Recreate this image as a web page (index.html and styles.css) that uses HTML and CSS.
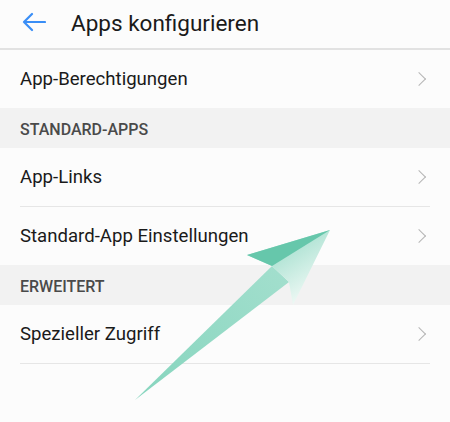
FILE: index.html
```html
<!DOCTYPE html>
<html lang="de">
<head>
    <meta charset="UTF-8">
    <title>Apps konfigurieren</title>
    <link rel="stylesheet" href="styles.css">
</head>
<body>
<div id="wrap">
    <div class="header">
        <svg class="back" width="24" height="20" viewBox="0 0 24 20">
            <path d="M23 10H2M10 2L2 10l8 8" fill="none" stroke="#3a8ef6" stroke-width="2.2" stroke-linecap="round" stroke-linejoin="round"/>
        </svg>
        <h1>Apps konfigurieren</h1>
    </div>
    <ul class="list">
        <li class="item last"><span>App-Berechtigungen</span><i class="chev"></i></li>
    </ul>
    <div class="section">STANDARD-APPS</div>
    <ul class="list">
        <li class="item"><span>App-Links</span><i class="chev"></i></li>
        <li class="item last"><span>Standard-App Einstellungen</span><i class="chev"></i></li>
    </ul>
    <div class="section">ERWEITERT</div>
    <ul class="list">
        <li class="item"><span>Spezieller Zugriff</span><i class="chev"></i></li>
    </ul>

    <!-- Hinweispfeil -->
    <svg class="pointer" width="450" height="422" viewBox="0 0 450 422">
        <defs>
            <linearGradient id="g2" x1="255" y1="235" x2="300" y2="305" gradientUnits="userSpaceOnUse">
                <stop offset="0" stop-color="#8ad6c0"/>
                <stop offset="1" stop-color="#f2faf7"/>
            </linearGradient>
            <linearGradient id="g3" x1="135" y1="400" x2="300" y2="250" gradientUnits="userSpaceOnUse">
                <stop offset="0" stop-color="#86d5be"/>
                <stop offset="1" stop-color="#a6e0cf"/>
            </linearGradient>
        </defs>
        <path d="M135 400L272 266L289 282Z" fill="url(#g3)"/>
        <path d="M330 230L247 255L272 266L289 282L293 305Z" fill="url(#g2)"/>
        <path d="M330 230L247 255L272 266Z" fill="#66c7ab"/>
    </svg>
</div>
</body>
</html>
```

FILE: styles.css
```css
*{
    margin:0;
    padding:0;
    list-style: none;
}
body,html{
    height: 100%;
    overflow: hidden;
    background: #fcfcfc;
}
body{
    font-family: Roboto, "Noto Sans", sans-serif;
    color: #1a1a1a;
}
#wrap{
    position: relative;
    height: 100%;
}
.header{
    display: flex;
    align-items: center;
    height: 48px;
    padding-left: 22px;
    border-bottom: 2px solid #e2e2e2;
}
.header .back{
    display: block;
    margin-top: -5px;
}
.header h1{
    font-size: 22.5px;
    font-weight: normal;
    margin-left: 25px;
    margin-top: -2px;
}
.item{
    display: flex;
    align-items: center;
    justify-content: space-between;
    height: 58px;
    margin: 0 20px;
    font-size: 18.6px;
    border-bottom: 1px solid #e6e6e6;
}
.item.last{
    border-bottom: 0;
}
.list + .section + .list .item{
    height: 58px;
}
.chev{
    width: 9px;
    height: 9px;
    border-top: 1.5px solid #b5b5b5;
    border-right: 1.5px solid #b5b5b5;
    transform: rotate(45deg);
    margin-right: 6px;
}
.section{
    height: 40px;
    line-height: 44px;
    padding-left: 20px;
    background: #f2f2f2;
    font-size: 16px;
    font-weight: 500;
    color: #4a4a4a;
}
.pointer{
    position: absolute;
    left: 0;
    top: 0;
}
```
